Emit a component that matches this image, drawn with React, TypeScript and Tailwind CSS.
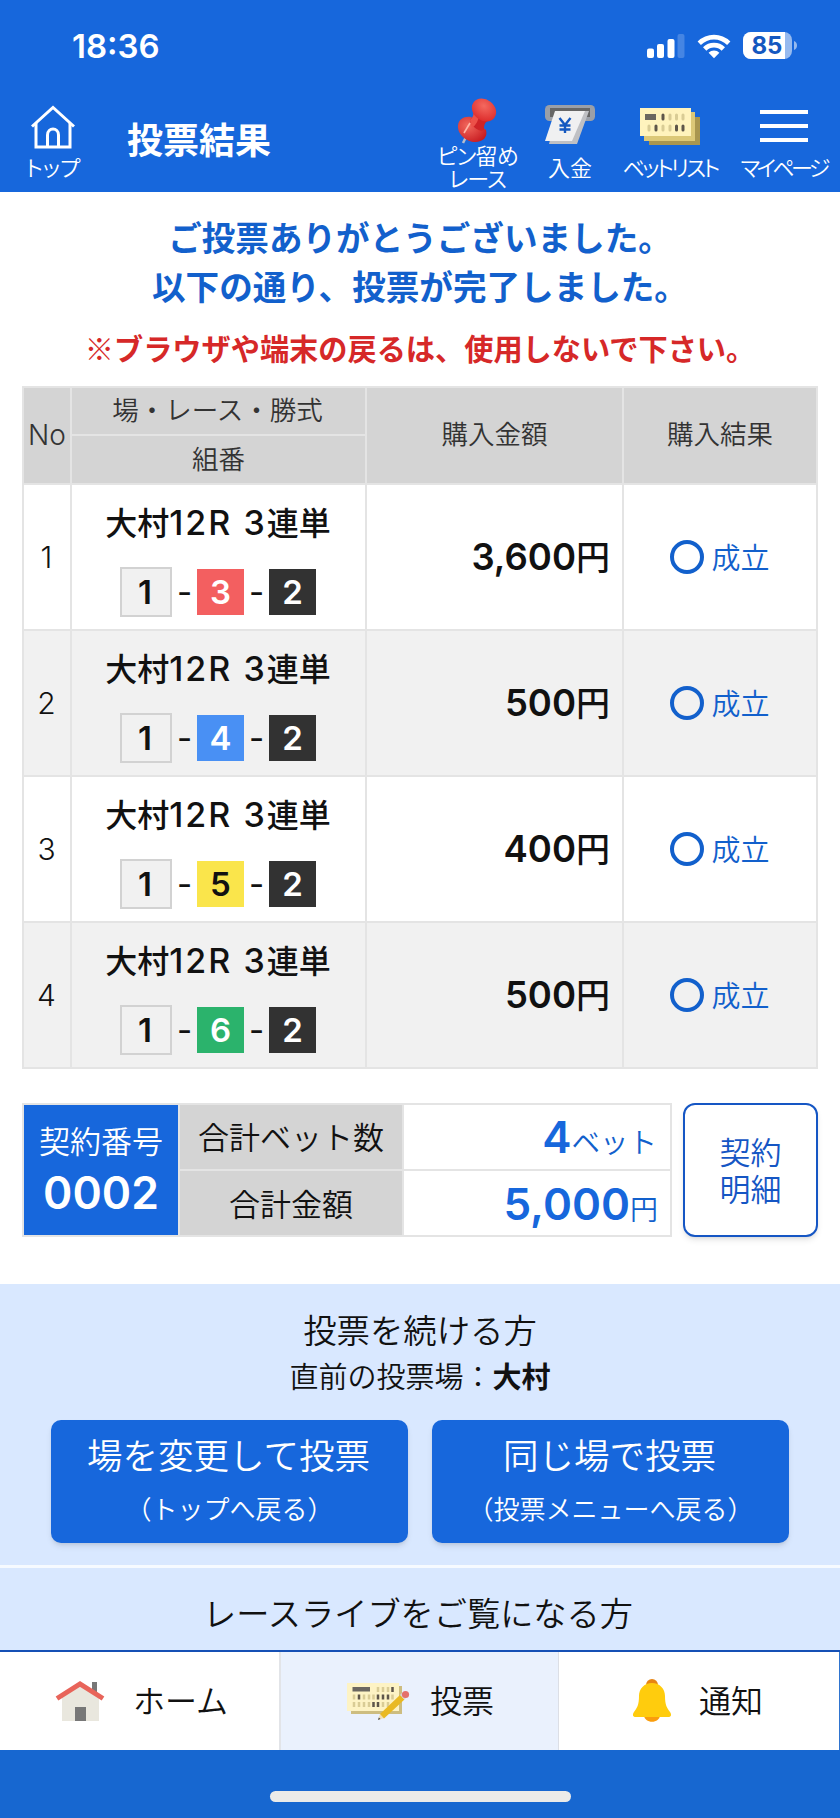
import type { ReactNode } from 'react';

type Bet = {
  no: number;
  boat: string;
  color: string;
  amount: string;
};

const bets: Bet[] = [
  { no: 1, boat: '3', color: 'bg-[#f35f60] text-white', amount: '3,600' },
  { no: 2, boat: '4', color: 'bg-[#4990f4] text-white', amount: '500' },
  { no: 3, boat: '5', color: 'bg-[#fae54b] text-[#111]', amount: '400' },
  { no: 4, boat: '6', color: 'bg-[#2bb36c] text-white', amount: '500' },
];

function StatusBar() {
  return (
    <div className="flex h-[88px] items-start justify-between pl-[72px] pr-[42px]">
      <div className="mt-[25px] font-['Inter'] text-[33px] font-semibold leading-[42px]">18:36</div>
      <svg className="mt-[30px]" width="152" height="32" viewBox="0 0 152 32" fill="#fff">
        <rect x="1" y="18.500" width="7" height="9.500" rx="2" />
        <rect x="11" y="14" width="7" height="14" rx="2" />
        <rect x="21.500" y="9" width="7" height="19" rx="2" />
        <rect x="31.500" y="4" width="7" height="24" rx="2" opacity=".2" />
        <path d="M51.600 11.500a23.500 23.500 0 0 1 32.800 0l-3.300 3.400a18.600 18.600 0 0 0-26.200 0z" />
        <path d="M57 17.200a15.800 15.800 0 0 1 22 0l-3.400 3.500a10.800 10.800 0 0 0-15.200 0z" />
        <path d="M62.600 22.800a7.600 7.600 0 0 1 10.800 0L68 28.200z" />
        <rect x="97" y="2" width="49" height="27" rx="8" opacity=".55" />
        <path d="M105 2h34v27h-34a8 8 0 0 1-8-8V10a8 8 0 0 1 8-8z" />
        <path d="M148 11c4 1.500 4 7.500 0 9z" opacity=".55" />
        <text x="105.500" y="24" fontFamily="Inter" fontWeight="700" fontSize="24" fill="#1458c0">
          85
        </text>
      </svg>
    </div>
  );
}

function HouseOutline() {
  return (
    <svg width="44" height="44" viewBox="0 0 44 44" fill="none" stroke="#fff" strokeWidth="3">
      <path d="M1 21.500 22 2.500l21 19" />
      <path d="M5 18v24h34V18" />
      <path d="M16.500 42V30c0-8 11-8 11 0v12" />
    </svg>
  );
}

function PinIcon() {
  return (
    <svg className="-ml-[4px]" width="40" height="46" viewBox="0 0 40 46">
      <defs>
        <radialGradient id="pinTop" cx=".4" cy=".35" r=".7">
          <stop offset="0" stopColor="#f4695f" />
          <stop offset="1" stopColor="#dd2b2b" />
        </radialGradient>
        <radialGradient id="pinBase" cx=".35" cy=".35" r=".8">
          <stop offset="0" stopColor="#f2685c" />
          <stop offset="1" stopColor="#c4161d" />
        </radialGradient>
      </defs>
      <path d="m9 39-3 6" stroke="#b7bccb" strokeWidth="2.500" />
      <path d="M1 27c1-6 6-9 13-8l15 13c2 7-3 12-11 12C10 44 0 37 1 27z" fill="url(#pinBase)" />
      <path d="M13 22c3-2 4-6 4-10l14 11c-3 1-4 4-4 8-1 5-14-2-14-9z" fill="#cf2427" />
      <path d="M13 22c3-2 4-6 4-10l5 4c0 6-3 11-7 14z" fill="#ec5148" />
      <ellipse cx="27" cy="12" rx="13" ry="10.500" transform="rotate(38 27 12)" fill="url(#pinTop)" />
      <path d="m13 25-6 10" stroke="#ffb5a5" strokeWidth="1.600" />
    </svg>
  );
}

function DepositIcon() {
  return (
    <svg width="52" height="42" viewBox="0 0 52 42">
      <rect x="1" y="1" width="50" height="16" rx="4.500" fill="#9a9fa8" />
      <rect x="6" y="4" width="40" height="9" fill="#666" />
      <path d="M13 7h32L33 40H5z" fill="#bfc0c4" />
      <path d="M11 7h30L28 37H1z" fill="#f0f0f1" />
      <path d="m15.500 14 5.500 7 5.500-7M21 21v8M15.500 21.500h11M15.500 25.500h11" fill="none" stroke="#1458c0" strokeWidth="2.400" />
    </svg>
  );
}

function BetListIcon() {
  return (
    <svg width="62" height="40" viewBox="0 0 62 40">
      <path d="M10 10h51v28H10z" fill="#a9964f" />
      <path d="M5 5h51v29H5z" fill="#dcc877" />
      <path d="M1 1h51v28H1z" fill="#fff3bd" />
      <path d="M6 7h11v6H6z" fill="#6b6760" />
      <g strokeWidth="3" strokeLinecap="round">
        <path d="M24 8v4M17 19v4M37.500 19v4M44 19v4" stroke="#5e564a" />
        <path d="M31 8v4M37.500 8v4M44 8v4M10 19v4M24 19v4M31 19v4" stroke="#d9cc95" />
      </g>
    </svg>
  );
}

function HomeIcon() {
  return (
    <svg width="50" height="42" viewBox="0 0 50 42">
      <path d="M37 2h5v14h-5z" fill="#777" />
      <path d="M7 17 25 5l19 12v24H7z" fill="#e9e7de" />
      <path d="M20 27h11v14H20z" fill="#777" />
      <path d="M2 18.500 25 4l23 14.500" fill="none" stroke="#e8645a" strokeWidth="5" />
    </svg>
  );
}

function TicketPencilIcon() {
  return (
    <svg width="64" height="42" viewBox="0 0 64 42">
      <path d="M5 6h51v28H5z" fill="#cdbd80" />
      <path d="M1 3h52v28H1z" fill="#fdf3c4" />
      <path d="M6.500 7H24v4.500H6.500z" fill="#6b6760" />
      <g strokeWidth="2.500">
        <path d="M46.500 7v5M13 14.500v5M32 14.500v5M37 14.500v5M42 14.500v5M27.500 22v5M32 22v5" stroke="#5e564a" />
        <path
          d="M32 7v5M37 7v5M42 7v5M8 14.500v5M18 14.500v5M23 14.500v5M27.500 14.500v5M46.500 14.500v5M8 22v5M13 22v5M18 22v5M23 22v5M37 22v5M42 22v5"
          stroke="#d9cc95"
        />
      </g>
      <path d="m32 40 2-6 4 4z" fill="#f3dfb0" />
      <path d="m32 40 .800-2.500 1.700 1.600z" fill="#444" />
      <path d="m34 34 20-19 4.500 4.500L38 38.500z" fill="#e9b923" />
      <path d="m54 15 2-2 4.500 4.500-2 2z" fill="#d8d8d8" />
      <circle cx="59.500" cy="14.500" r="3.600" fill="#e4716b" />
    </svg>
  );
}

function BellIcon() {
  return (
    <svg width="40" height="46" viewBox="0 0 40 46">
      <circle cx="20" cy="7" r="6" fill="#e78412" />
      <path d="M12 37h16c0 9-16 9-16 0z" fill="#fa9d0c" />
      <path
        d="M20 5c8 0 13 6 13 13 0 9 2 12 5 16 2 3 1 5-2 5H4c-3 0-4-2-2-5 3-4 5-7 5-16C7 11 12 5 20 5z"
        fill="#ffcc0d"
      />
    </svg>
  );
}

type HeaderItemProps = {
  icon: ReactNode;
  label: string;
  className: string;
  iconClass?: string;
  labelClass?: string;
};

function HeaderItem({ icon, label, className, iconClass = '', labelClass = '' }: HeaderItemProps) {
  return (
    <button className={`flex flex-col items-center ${className}`}>
      <span className={`flex h-[61px] items-center justify-center ${iconClass}`}>{icon}</span>
      <span
        className={`whitespace-nowrap text-[22px] font-[350] leading-[34px] [font-feature-settings:'palt'] ${labelClass}`}
      >
        {label}
      </span>
    </button>
  );
}

function Header() {
  return (
    <header className="h-[192px] shrink-0 bg-[#1767dc] text-white">
      <StatusBar />
      <div className="flex h-[104px]">
        <HeaderItem className="w-[107px] pr-[1px]" iconClass="pt-[16px]" icon={<HouseOutline />} label="トップ" />
        <h1 className="ml-[20px] flex-1 text-[36px] font-bold leading-[101px]">投票結果</h1>
        <button className="flex w-[90px] flex-col items-center pt-[10px] text-[22px] font-[350] leading-[23px]">
          <PinIcon />
          <span className="-mt-px whitespace-nowrap pr-[3px] tracking-[-0.8px] [font-feature-settings:'palt']">
            ピン留め
            <br />
            レース
          </span>
        </button>
        <HeaderItem className="w-[92px]" iconClass="pt-[13px]" icon={<DepositIcon />} label="入金" />
        <HeaderItem
          className="w-[110px] pr-[2px]"
          iconClass="pt-[17px]"
          labelClass="tracking-[-2.7px]"
          icon={<BetListIcon />}
          label="ベットリスト"
        />
        <HeaderItem
          className="w-[114px] pl-[1px]"
          iconClass="pt-[15px]"
          labelClass="tracking-[-3.6px]"
          icon={
            <span className="flex flex-col gap-[10px]">
              <span className="h-[4px] w-[48px] bg-white" />
              <span className="h-[4px] w-[48px] bg-white" />
              <span className="h-[4px] w-[48px] bg-white" />
            </span>
          }
          label="マイページ"
        />
      </div>
    </header>
  );
}

function BetRow({ bet }: { bet: Bet }) {
  const bg = bet.no % 2 === 0 ? 'bg-[#f1f1f1]' : 'bg-white';
  return (
    <>
      <div className={`flex items-center justify-center pr-px font-['Inter'] text-[30px] font-light ${bg}`}>
        {bet.no}
      </div>
      <div className={`flex flex-col items-center pr-px ${bg}`}>
        <div className="mt-[13px] whitespace-nowrap text-[32px] font-medium leading-[46px]">
          大村<span className="font-['Inter'] text-[34px] tracking-[2px]">12R 3</span>連単
        </div>
        <div className="mt-[21px] flex items-center font-['Inter'] text-[33px] font-semibold leading-none">
          <span className="flex h-[50px] w-[52px] items-center justify-center border-2 border-[#d2d2d2] bg-[#f1f1f1] pr-[2px]">
            1
          </span>
          <span className="w-[25px] text-center font-normal">-</span>
          <span className={`flex h-[46px] w-[47px] items-center justify-center ${bet.color}`}>{bet.boat}</span>
          <span className="w-[25px] text-center font-normal">-</span>
          <span className="flex h-[46px] w-[47px] items-center justify-center bg-[#323232] text-white">2</span>
        </div>
      </div>
      <div className={`flex items-center justify-end pr-[12px] text-[34px] font-medium ${bg}`}>
        <span>
          <span className="font-['Inter'] text-[36.500px] font-semibold">{bet.amount}</span>円
        </span>
      </div>
      <div className={`flex items-center justify-center gap-[7px] text-[29px] font-[350] text-[#1260cc] ${bg}`}>
        <span className="h-[34px] w-[34px] rounded-full border-4 border-[#1260cc]" />
        <span>成立</span>
      </div>
    </>
  );
}

function ResultTable() {
  return (
    <div className="mx-[22px] grid grid-cols-[46px_293px_255px_192px] grid-rows-[46px_47px_144px_144px_144px_144px] gap-[2px] bg-[#e4e4e4] p-[2px] text-[26.500px] font-[350]">
      <div className="row-span-2 flex items-center justify-center bg-[#d4d4d4] pb-[2px] font-['Inter'] text-[28px] font-light text-[#333]">
        No
      </div>
      <div className="flex items-center justify-center bg-[#d4d4d4] pb-[4px] pr-[2px] text-[#333]">場・レース・勝式</div>
      <div className="row-span-2 flex items-center justify-center bg-[#d4d4d4] pb-[5px] text-[#333]">購入金額</div>
      <div className="row-span-2 flex items-center justify-center bg-[#d4d4d4] pb-[5px] text-[#333]">購入結果</div>
      <div className="flex items-center justify-center bg-[#d4d4d4] pb-[3px] text-[#333]">組番</div>
      {bets.map((bet) => (
        <BetRow key={bet.no} bet={bet} />
      ))}
    </div>
  );
}

function Summary() {
  return (
    <div className="mx-[22px] mt-[34px] flex h-[134px] justify-between">
      <div className="grid grid-cols-[154px_222px_266px] grid-rows-[64px_64px] gap-[2px] bg-[#e4e4e4] p-[2px] font-[350]">
        <div className="row-span-2 flex flex-col items-center bg-[#1767dc] text-white">
          <span className="mt-[15px] text-[31px] leading-[40px]">契約番号</span>
          <span className="mt-[7px] font-['Inter'] text-[44.500px] font-semibold leading-[52px]">0002</span>
        </div>
        <div className="flex items-center justify-center bg-[#d4d4d4] pb-[2px] text-[31px]">合計ベット数</div>
        <div className="flex items-center justify-end bg-white pr-[13px] text-[28.500px] text-[#1260cc]">
          <span>
            <span className="font-['Inter'] text-[44px] font-semibold leading-[60px] text-[#1767dc]">4</span>ベット
          </span>
        </div>
        <div className="flex items-center justify-center bg-[#d4d4d4] text-[31px]">合計金額</div>
        <div className="flex items-center justify-end bg-white pr-[12px] pt-[2px] text-[28px] text-[#1260cc]">
          <span>
            <span className="font-['Inter'] text-[44px] font-semibold leading-[60px] text-[#1767dc]">5,000</span>円
          </span>
        </div>
      </div>
      <button className="w-[135px] rounded-xl border-2 border-[#1556c4] bg-white pb-[3px] text-[31px] font-[350] leading-[37px] text-[#1556c4] shadow-md">
        契約
        <br />
        明細
      </button>
    </div>
  );
}

function VoteButton({ title, note }: { title: string; note: string }) {
  return (
    <button className="flex h-[123px] flex-1 flex-col items-center rounded-[10px] bg-[#1767dc] font-[350] text-white shadow-md">
      <span className="mt-[10px] pr-[2px] text-[35.500px] leading-[48px]">{title}</span>
      <span className="mt-[12px] text-[26px] leading-[36px]">{note}</span>
    </button>
  );
}

function Tab({ icon, label, className }: { icon: ReactNode; label: string; className: string }) {
  return (
    <button className={`flex h-[98px] items-center text-[32px] font-[350] ${className}`}>
      {icon}
      <span className="pb-[5px]">{label}</span>
    </button>
  );
}

export default function App() {
  return (
    <div className="flex h-[1818px] w-[840px] flex-col overflow-hidden bg-white font-['Noto_Sans_CJK_JP',sans-serif] text-[#111]">
      <Header />

      <div className="h-[194px] shrink-0 pt-[20px] text-center">
        <p className="text-[33.600px] font-bold leading-[49px] text-[#1260cc]">
          ご投票ありがとうございました。
          <br />
          以下の通り、投票が完了しました。
        </p>
        <p className="mt-[17px] text-[29.200px] font-bold leading-[40px] text-[#d62828]">
          ※ブラウザや端末の戻るは、使用しないで下さい。
        </p>
      </div>

      <ResultTable />
      <Summary />

      <section className="mt-[47px] h-[281px] shrink-0 bg-[#d9e8ff] pt-[20px] text-center">
        <h2 className="text-[33.400px] font-[350] leading-[50px]">投票を続ける方</h2>
        <p className="text-[29px] font-[350] leading-[42px]">
          直前の投票場：<b className="font-bold">大村</b>
        </p>
        <div className="mt-[24px] flex gap-6 px-[51px]">
          <VoteButton title="場を変更して投票" note="（トップへ戻る）" />
          <VoteButton title="同じ場で投票" note="（投票メニューへ戻る）" />
        </div>
      </section>
      <section className="h-[85px] shrink-0 border-t-[3px] border-[#f6faff] bg-[#d9e8ff] text-center">
        <h2 className="pt-[19px] pr-[4px] text-[33.200px] font-[350] leading-[50px]">レースライブをご覧になる方</h2>
      </section>

      <nav className="flex h-[100px] shrink-0 border-t-2 border-[#1550b5]">
        <Tab className="w-[281px] gap-[28px] border-r-2 border-[#e2e4e8] bg-white pl-[55px]" icon={<HomeIcon />} label="ホーム" />
        <Tab
          className="w-[278px] gap-[20px] border-r border-[#dcdfe6] bg-[#eaf1fd] pl-[65px]"
          icon={<TicketPencilIcon />}
          label="投票"
        />
        <Tab className="flex-1 gap-[27px] border-r border-[#2f74cf] bg-white pl-[73px]" icon={<BellIcon />} label="通知" />
      </nav>
      <footer className="flex h-[68px] shrink-0 justify-center bg-[#1767d0] pt-[41px]">
        <div className="h-[11px] w-[301px] rounded-full bg-[#ebebe9]" />
      </footer>
    </div>
  );
}
